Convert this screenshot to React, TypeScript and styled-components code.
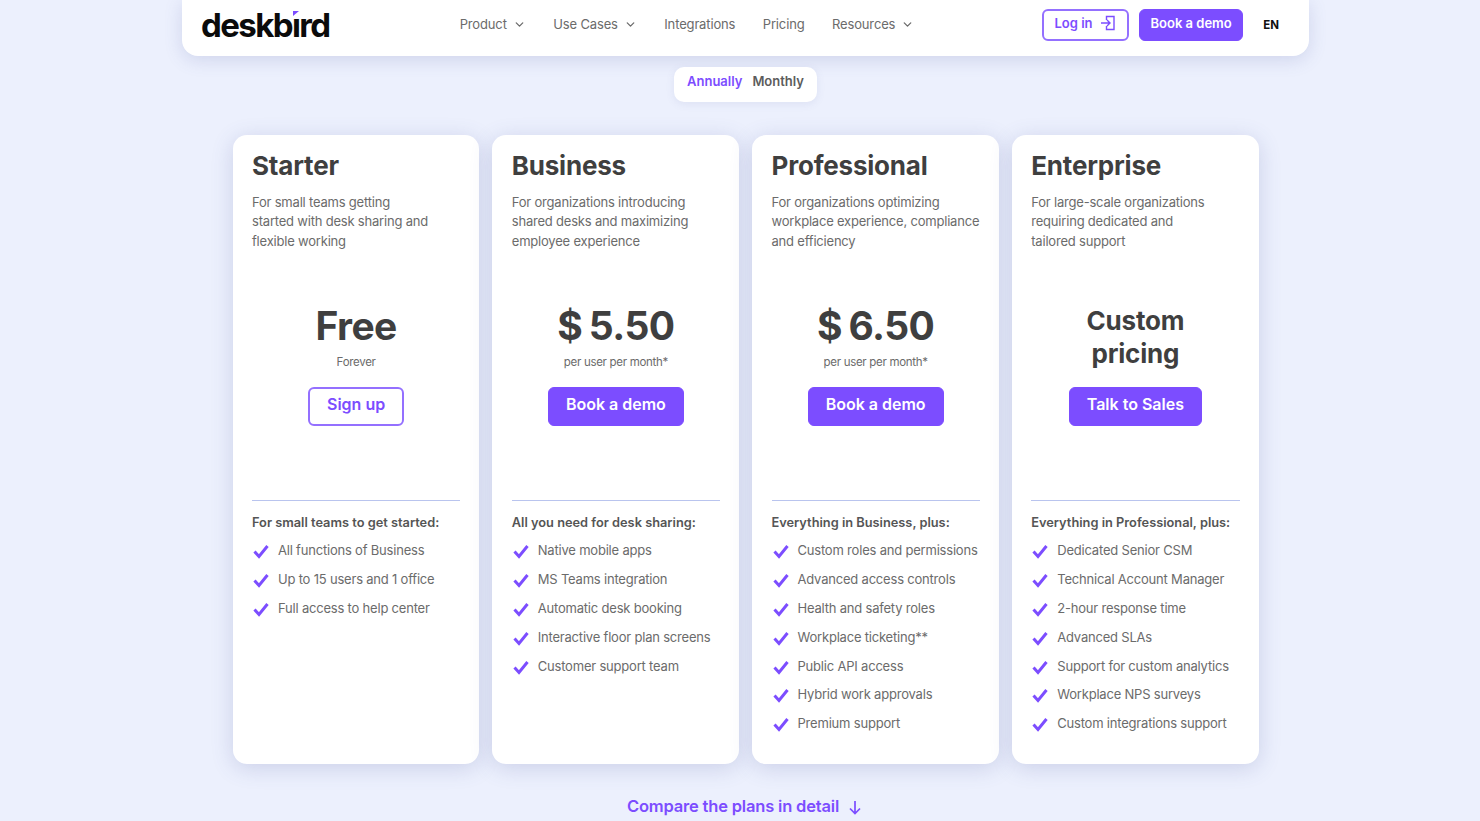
import React from 'react';
import styled, { createGlobalStyle } from 'styled-components';
import { ChevronDown } from 'lucide-react';

const PURPLE = '#7c4dff';
const INK = '#3f3f3f';
const GREY = '#6b6b6b';

interface Plan {
  name: string;
  blurb: string[];
  price: string[];
  note?: string;
  cta: string;
  outline?: boolean;
  heading: string;
  items: string[];
}

const plans: Plan[] = [
  {
    name: 'Starter',
    blurb: ['For small teams getting', 'started with desk sharing and', 'flexible working'],
    price: ['Free'],
    note: 'Forever',
    cta: 'Sign up',
    outline: true,
    heading: 'For small teams to get started:',
    items: ['All functions of Business', 'Up to 15 users and 1 office', 'Full access to help center'],
  },
  {
    name: 'Business',
    blurb: ['For organizations introducing', 'shared desks and maximizing', 'employee experience'],
    price: ['$ 5.50'],
    note: 'per user per month*',
    cta: 'Book a demo',
    heading: 'All you need for desk sharing:',
    items: [
      'Native mobile apps',
      'MS Teams integration',
      'Automatic desk booking',
      'Interactive floor plan screens',
      'Customer support team',
    ],
  },
  {
    name: 'Professional',
    blurb: ['For organizations optimizing', 'workplace experience, compliance', 'and efficiency'],
    price: ['$ 6.50'],
    note: 'per user per month*',
    cta: 'Book a demo',
    heading: 'Everything in Business, plus:',
    items: [
      'Custom roles and permissions',
      'Advanced access controls',
      'Health and safety roles',
      'Workplace ticketing**',
      'Public API access',
      'Hybrid work approvals',
      'Premium support',
    ],
  },
  {
    name: 'Enterprise',
    blurb: ['For large-scale organizations', 'requiring dedicated and', 'tailored support'],
    price: ['Custom', 'pricing'],
    cta: 'Talk to Sales',
    heading: 'Everything in Professional, plus:',
    items: [
      'Dedicated Senior CSM',
      'Technical Account Manager',
      '2-hour response time',
      'Advanced SLAs',
      'Support for custom analytics',
      'Workplace NPS surveys',
      'Custom integrations support',
    ],
  },
];

const GlobalStyle = createGlobalStyle`
  html, body {
    margin: 0;
    height: 821px;
    overflow: hidden;
    background: #ecf0fd;
    font-family: Inter, "Liberation Sans", sans-serif;
  }
  * { box-sizing: border-box; }
`;

const Page = styled.div`
  width: 1480px;
  height: 821px;
  overflow: hidden;
  padding-left: 11px;
  display: flex;
  flex-direction: column;
  align-items: center;
`;

const Nav = styled.header`
  width: 1127px;
  height: 56px;
  flex: none;
  background: #fff;
  border-radius: 0 0 16px 16px;
  box-shadow: 0 4px 18px rgba(80, 90, 160, 0.18);
  display: flex;
  align-items: center;
  padding: 0 30px 7px 19px;
`;

const Logo = styled.div`
  position: relative;
  width: 240px;
  margin-top: 1px;
  font-size: 33px;
  line-height: 36px;
  font-weight: 700;
  letter-spacing: -1.6px;
  color: #0b0b0b;
`;

const LogoMark = styled.svg`
  position: absolute;
  left: 90px;
  top: 3px;
  width: 9px;
  height: 7px;
  background: #fff;
`;

const NavLinks = styled.nav`
  width: 583px;
  margin: -1px 0 0 19px;
  display: flex;
  align-items: center;
  gap: 27.5px;
`;

const NavLink = styled.span`
  display: inline-flex;
  align-items: center;
  gap: 6px;
  font-size: 13px;
  letter-spacing: -0.15px;
  color: ${GREY};
`;

const NavRight = styled.div`
  display: flex;
  align-items: center;
  gap: 10px;
  margin-left: auto;
`;

const SmallButton = styled.span<{ $outline?: boolean }>`
  height: 32px;
  display: inline-flex;
  align-items: center;
  gap: 8px;
  padding: 0 10.5px 3px;
  border-radius: 6px;
  white-space: nowrap;
  font-size: 13px;
  font-weight: 600;
  color: ${(p) => (p.$outline ? PURPLE : '#fff')};
  background: ${(p) => (p.$outline ? '#fff' : PURPLE)};
  border: ${(p) => (p.$outline ? '2px solid #9470ff' : `1.5px solid ${PURPLE}`)};
`;

const Lang = styled.span`
  margin-left: 10px;
  font-size: 11.5px;
  font-weight: 700;
  color: #111;
`;

const Toggle = styled.div`
  flex: none;
  margin-top: 11px;
  width: 143px;
  height: 35px;
  background: #fff;
  border-radius: 10px;
  box-shadow: 0 2px 8px rgba(90, 100, 160, 0.1);
  display: flex;
  align-items: center;
  justify-content: center;
  gap: 10px;
  padding-bottom: 7px;
  font-size: 13px;
  font-weight: 600;
`;

const ToggleOption = styled.span<{ $active?: boolean }>`
  color: ${(p) => (p.$active ? PURPLE : '#5c5c5c')};
`;

const Cards = styled.main`
  flex: none;
  margin-top: 33px;
  display: grid;
  grid-template-columns: repeat(4, 246.75px);
  column-gap: 13px;
`;

const Card = styled.section`
  height: 628.5px;
  background: #fff;
  border-radius: 14px;
  box-shadow: 0 4px 22px rgba(70, 80, 150, 0.2);
  padding: 13px 19px 0 19.5px;
  display: flex;
  flex-direction: column;
`;

const PlanName = styled.h2`
  margin: 0;
  height: 36px;
  font-size: 26px;
  line-height: 36px;
  font-weight: 700;
  letter-spacing: -0.2px;
  color: ${INK};
`;

const Blurb = styled.p`
  margin: 8.5px 0 0;
  height: 98.5px;
  font-size: 13px;
  line-height: 19.5px;
  letter-spacing: -0.2px;
  color: ${GREY};
`;

const BlurbLine = styled.span`
  display: block;
  white-space: nowrap;
`;

const PriceBox = styled.div`
  height: 82px;
  display: flex;
  flex-direction: column;
  align-items: center;
  justify-content: flex-start;
  text-align: center;
`;

const Price = styled.div<{ $small?: boolean }>`
  margin-top: ${(p) => (p.$small ? '13px' : '11px')};
  font-size: ${(p) => (p.$small ? '26px' : '39px')};
  line-height: ${(p) => (p.$small ? '33px' : '48px')};
  font-weight: 700;
  letter-spacing: ${(p) => (p.$small ? '-0.2px' : '-0.6px')};
  word-spacing: -2px;
  color: ${INK};
`;

const Note = styled.div`
  margin-top: 4px;
  font-size: 11.5px;
  line-height: 16px;
  letter-spacing: -0.3px;
  color: ${GREY};
`;

const CtaRow = styled.div`
  margin-top: 14px;
  display: flex;
  justify-content: center;
`;

const Cta = styled.span<{ $outline?: boolean }>`
  height: 39px;
  display: inline-flex;
  align-items: center;
  justify-content: center;
  padding: 0 17px 5px;
  border-radius: 6px;
  border: ${(p) => (p.$outline ? '2px solid #9470ff' : `1.5px solid ${PURPLE}`)};
  font-size: 16px;
  font-weight: 600;
  color: ${(p) => (p.$outline ? PURPLE : '#fff')};
  background: ${(p) => (p.$outline ? '#fff' : PURPLE)};
`;

const Divider = styled.hr`
  width: 100%;
  margin: 74px 0 0;
  border: 0;
  border-top: 1px solid #b9c4ee;
`;

const FeatureHeading = styled.h3`
  margin: 13px 0 0;
  height: 18px;
  font-size: 12.8px;
  line-height: 18px;
  font-weight: 600;
  color: #555;
`;

const FeatureList = styled.ul`
  list-style: none;
  margin: 9px 0 0;
  padding: 0;
`;

const Feature = styled.li`
  height: 28.9px;
  display: flex;
  align-items: flex-start;
  gap: 8px;
  font-size: 13px;
  line-height: 18px;
  letter-spacing: -0.2px;
  color: ${GREY};
  white-space: nowrap;
`;

const Check = styled.svg`
  flex: none;
  width: 18px;
  height: 18px;
  margin-top: 1px;
`;

const Compare = styled.div`
  flex: none;
  margin: 32.5px 0 0 -2px;
  display: flex;
  align-items: center;
  gap: 9px;
  font-size: 16.5px;
  line-height: 20px;
  font-weight: 600;
  letter-spacing: -0.18px;
  color: ${PURPLE};
`;

function CheckIcon() {
  return (
    <Check viewBox="0 0 18 18" fill="none">
      <path d="M2.5 9.5 L7 14.5 L15.5 4" stroke={PURPLE} strokeWidth="3" strokeLinejoin="miter" />
    </Check>
  );
}

function LoginIcon() {
  return (
    <svg width="16" height="16" viewBox="0 0 16 16" fill="none" stroke={PURPLE} strokeWidth="1.4">
      <path d="M6.5 5 V1.5 H14 V14.5 H6.5 V11" />
      <path d="M1 8 H10 M7 5 L10 8 L7 11" />
    </svg>
  );
}

function ArrowDownIcon() {
  return (
    <svg width="14" height="15" viewBox="0 0 14 15" fill="none" stroke={PURPLE} strokeWidth="1.7" style={{ marginTop: 3 }}>
      <path d="M7 1 V13.5 M2 8.5 L7 13.5 L12 8.5" />
    </svg>
  );
}

function PlanCard({ plan }: { plan: Plan }) {
  return (
    <Card>
      <PlanName>{plan.name}</PlanName>
      <Blurb>
        {plan.blurb.map((line) => (
          <BlurbLine key={line}>{line}</BlurbLine>
        ))}
      </Blurb>
      <PriceBox>
        <Price $small={plan.price.length > 1}>
          {plan.price.map((line) => (
            <div key={line}>{line}</div>
          ))}
        </Price>
        {plan.note && <Note>{plan.note}</Note>}
      </PriceBox>
      <CtaRow>
        <Cta $outline={plan.outline}>{plan.cta}</Cta>
      </CtaRow>
      <Divider />
      <FeatureHeading>{plan.heading}</FeatureHeading>
      <FeatureList>
        {plan.items.map((item) => (
          <Feature key={item}>
            <CheckIcon />
            {item}
          </Feature>
        ))}
      </FeatureList>
    </Card>
  );
}

export default function App() {
  return (
    <Page>
      <GlobalStyle />
      <Nav>
        <Logo>
          deskbird
          <LogoMark viewBox="0 0 9 7">
            <path d="M2 1 H8 L2 6 Z" fill={PURPLE} />
          </LogoMark>
        </Logo>
        <NavLinks>
          <NavLink>
            Product <ChevronDown size={13} strokeWidth={2.4} />
          </NavLink>
          <NavLink>
            Use Cases <ChevronDown size={13} strokeWidth={2.4} />
          </NavLink>
          <NavLink>Integrations</NavLink>
          <NavLink>Pricing</NavLink>
          <NavLink>
            Resources <ChevronDown size={13} strokeWidth={2.4} />
          </NavLink>
        </NavLinks>
        <NavRight>
          <SmallButton $outline>
            Log in <LoginIcon />
          </SmallButton>
          <SmallButton>Book a demo</SmallButton>
          <Lang>EN</Lang>
        </NavRight>
      </Nav>
      <Toggle>
        <ToggleOption $active>Annually</ToggleOption>
        <ToggleOption>Monthly</ToggleOption>
      </Toggle>
      <Cards>
        {plans.map((plan) => (
          <PlanCard key={plan.name} plan={plan} />
        ))}
      </Cards>
      <Compare>
        Compare the plans in detail <ArrowDownIcon />
      </Compare>
    </Page>
  );
}
